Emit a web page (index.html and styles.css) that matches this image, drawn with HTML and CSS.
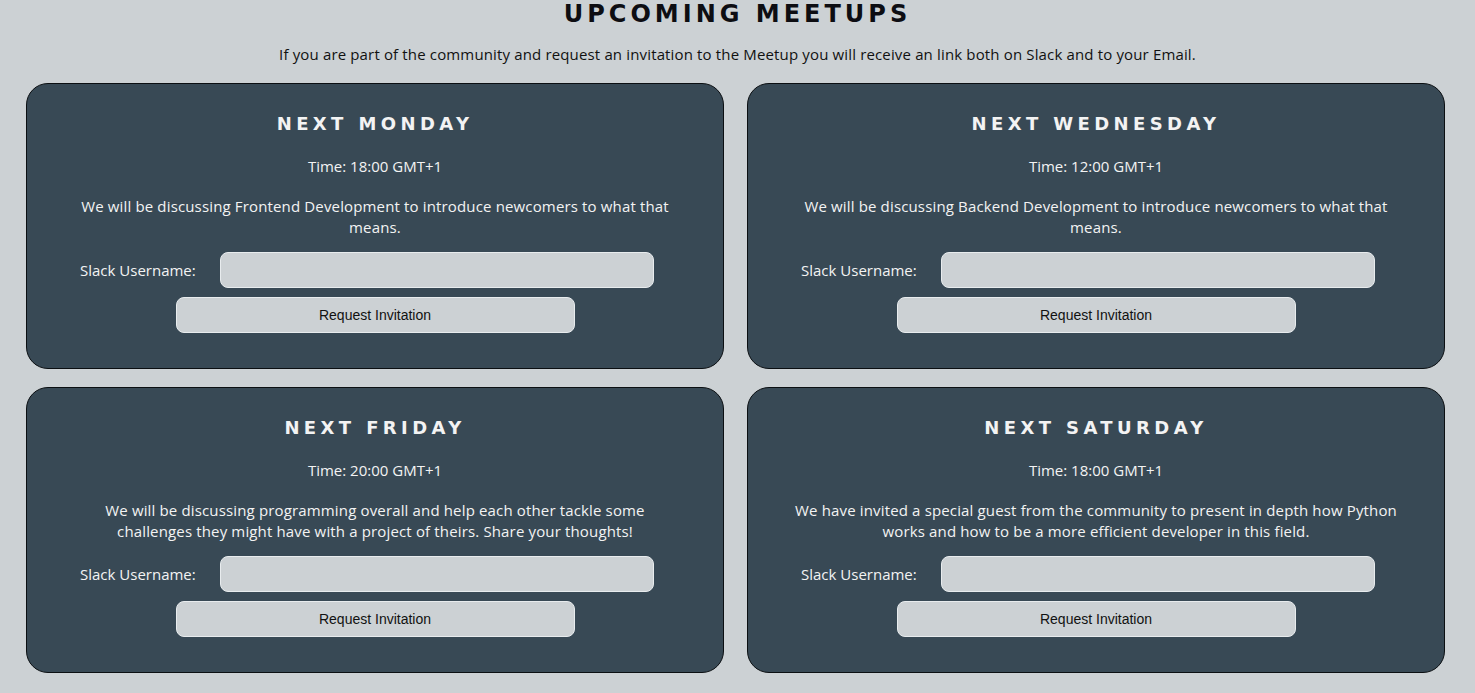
FILE: index.html
```html
<!DOCTYPE html>
<html lang="en">
<head>
<meta charset="utf-8">
<title>Upcoming Meetups</title>
<link rel="stylesheet" href="styles.css">
</head>
<body>
<section class="meetups">
  <h1 class="title">UPCOMING MEETUPS</h1>
  <p class="intro">If you are part of the community and request an invitation to the Meetup you will receive an link both on Slack and to your Email.</p>
  <div class="grid">
    <article class="card">
      <h2 class="card-title">NEXT MONDAY</h2>
      <p class="time">Time: 18:00 GMT+1</p>
      <p class="desc">We will be discussing Frontend Development to introduce newcomers to what that means.</p>
      <form class="form">
        <div class="row"><label class="label">Slack Username:</label><input class="input" type="text"></div>
        <button class="btn" type="button">Request Invitation</button>
      </form>
    </article>
    <article class="card">
      <h2 class="card-title">NEXT WEDNESDAY</h2>
      <p class="time">Time: 12:00 GMT+1</p>
      <p class="desc">We will be discussing Backend Development to introduce newcomers to what that means.</p>
      <form class="form">
        <div class="row"><label class="label">Slack Username:</label><input class="input" type="text"></div>
        <button class="btn" type="button">Request Invitation</button>
      </form>
    </article>
    <article class="card">
      <h2 class="card-title">NEXT FRIDAY</h2>
      <p class="time">Time: 20:00 GMT+1</p>
      <p class="desc">We will be discussing programming overall and help each other tackle some challenges they might have with a project of theirs. Share your thoughts!</p>
      <form class="form">
        <div class="row"><label class="label">Slack Username:</label><input class="input" type="text"></div>
        <button class="btn" type="button">Request Invitation</button>
      </form>
    </article>
    <article class="card">
      <h2 class="card-title">NEXT SATURDAY</h2>
      <p class="time">Time: 18:00 GMT+1</p>
      <p class="desc">We have invited a special guest from the community to present in depth how Python works and how to be a more efficient developer in this field.</p>
      <form class="form">
        <div class="row"><label class="label">Slack Username:</label><input class="input" type="text"></div>
        <button class="btn" type="button">Request Invitation</button>
      </form>
    </article>
  </div>
</section>
</body>
</html>
```
FILE: styles.css
```css
html, body {
  margin: 0;
  padding: 0;
  background: #ccd1d4;
}
body {
  font-family: "Open Sans", "Noto Sans", sans-serif;
  color: #111;
}
.meetups {
  display: flex;
  flex-direction: column;
  align-items: center;
}
.title {
  margin: 0;
  padding-top: 1px;
  font-family: "DejaVu Sans", sans-serif;
  font-weight: bold;
  font-size: 24px;
  line-height: 26px;
  letter-spacing: 4px;
  color: #0d0d12;
}
.intro {
  margin: 17px 0 0;
  font-size: 15px;
  line-height: 20px;
  letter-spacing: 0.15px;
}
.grid {
  align-self: stretch;
  display: grid;
  grid-template-columns: 698px 698px;
  column-gap: 23px;
  row-gap: 18px;
  padding: 0 30px 0 26px;
  margin-top: 19px;
}
.card {
  box-sizing: border-box;
  background: #384955;
  border: 1px solid #0b0f12;
  border-radius: 22px;
  padding: 28px 40px 35px;
  display: flex;
  flex-direction: column;
  align-items: center;
  color: #f3f3f3;
  height: 286px;
}
.card-title {
  margin: 0;
  font-family: "DejaVu Sans", sans-serif;
  font-weight: bold;
  font-size: 18px;
  line-height: 24px;
  letter-spacing: 4.4px;
}
.time {
  margin: 20px 0 0;
  font-size: 15px;
  line-height: 21px;
}
.desc {
  margin: 19px 0 0;
  font-size: 15px;
  line-height: 21px;
  letter-spacing: 0.15px;
  text-align: center;
}
.form {
  align-self: stretch;
  display: flex;
  flex-direction: column;
  align-items: center;
  margin-top: auto;
}
.row {
  align-self: stretch;
  display: flex;
  align-items: center;
  padding-left: 13px;
}
.label {
  font-size: 15px;
  width: 140px;
}
.input {
  box-sizing: border-box;
  width: 434px;
  height: 36px;
  background: #ccd1d4;
  border: 1px solid #e8ecee;
  border-radius: 8px;
  margin: 0;
}
.btn {
  box-sizing: border-box;
  margin-top: 9px;
  width: 399px;
  height: 36px;
  background: #ccd1d4;
  border: 1px solid #e8ecee;
  border-radius: 8px;
  font-family: "Liberation Sans", Arial, sans-serif;
  font-size: 14px;
  color: #111;
}
```
